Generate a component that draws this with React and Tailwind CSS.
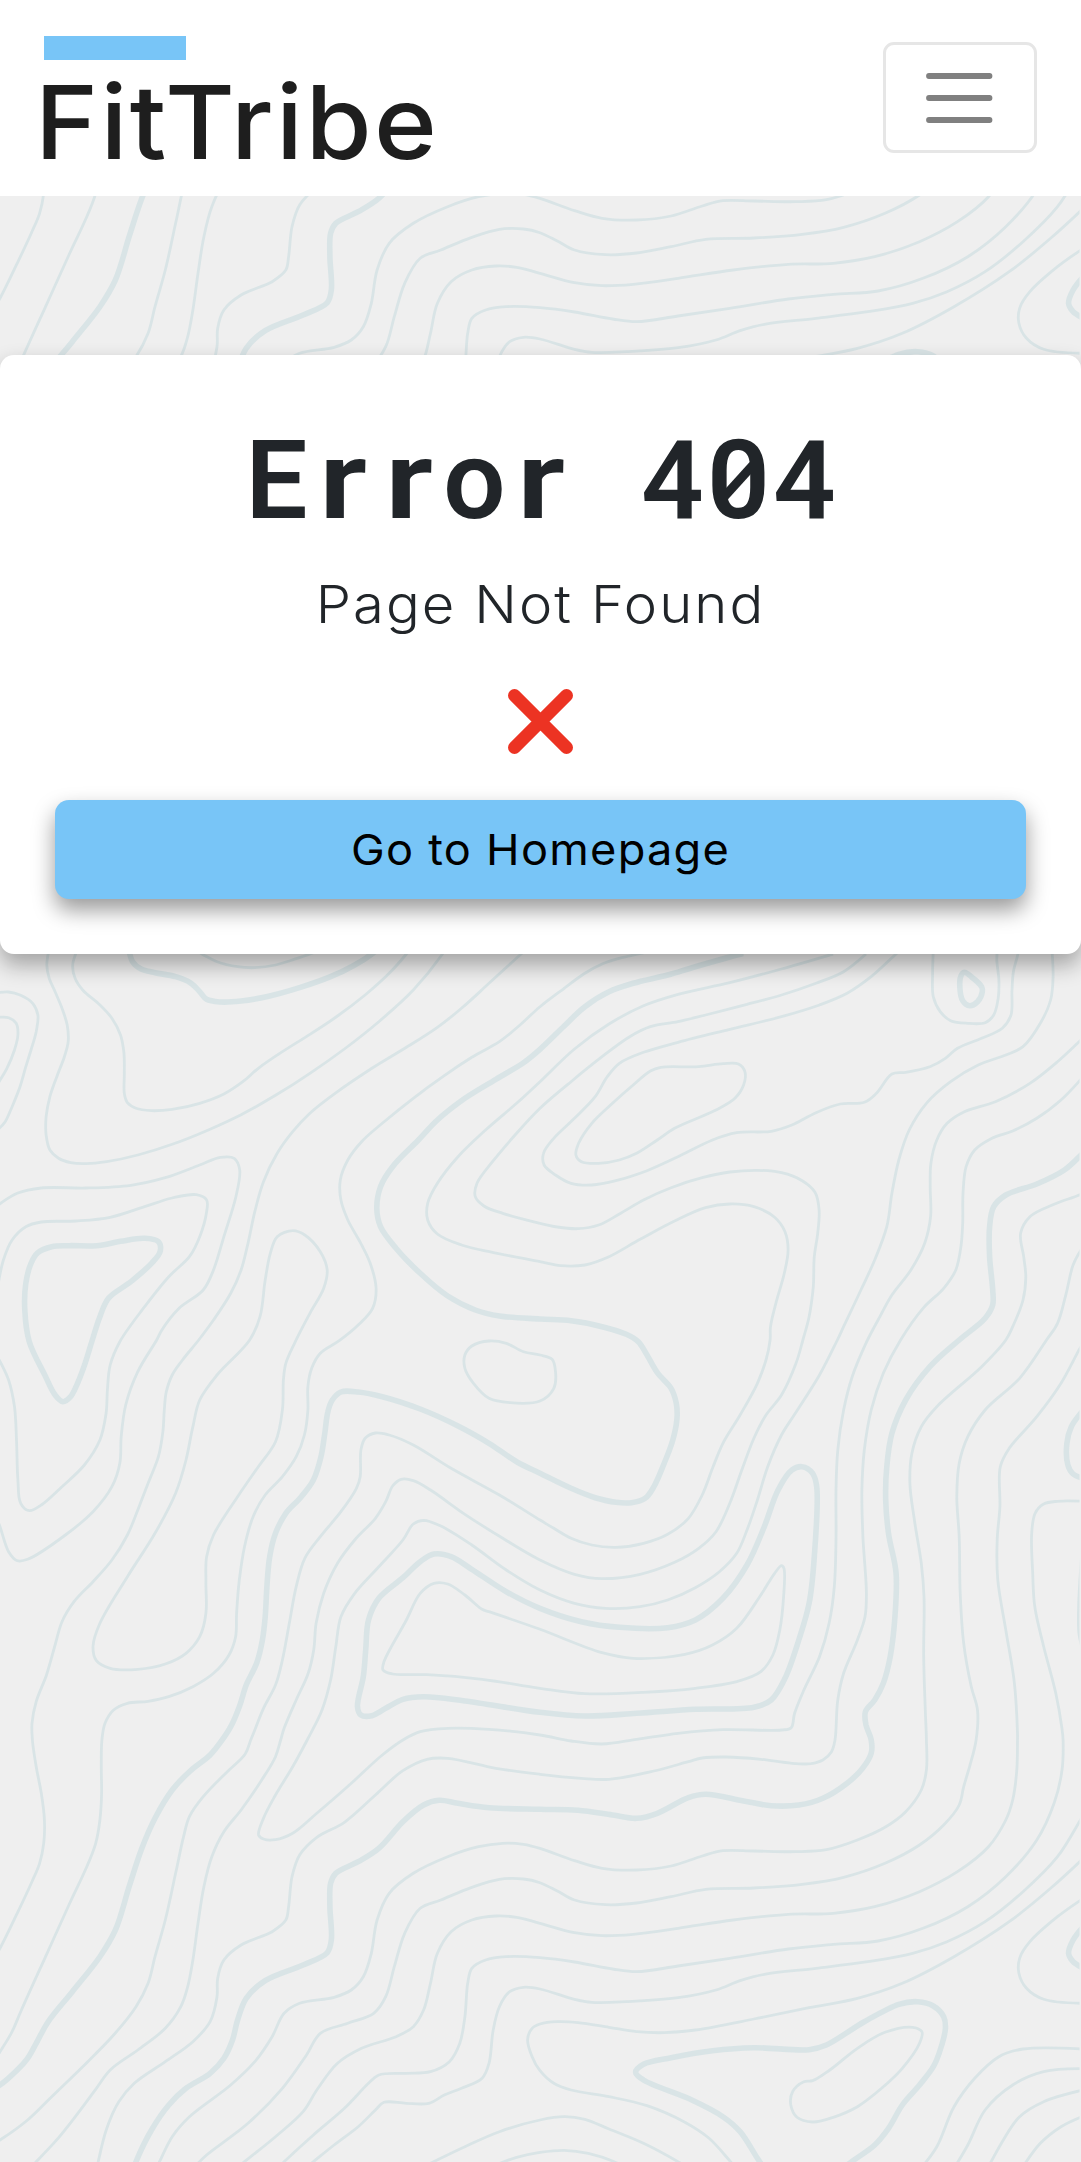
import React from "react";

// The contour map is digitised in six sheets; each sheet has its own origin and unit size.
const SHEETS = {
  A: [0, 940, 540 / 1568],
  B: [540, 940, 541 / 1568],
  C: [0, 1340, 540 / 1568],
  D: [540, 1340, 541 / 1568],
  E: [0, 1740, 540 / 1568],
  F: [540, 1740, 541 / 1568],
};
const TILE_HEIGHT = 1650;

const THIN = [
  "A -5,158 25,156 60,166 95,190 110,225 105,275 90,330 75,380 58,440 35,500 15,545 -5,568",
  "A -5,232 25,233 47,250 52,285 42,330 20,385 -5,428",
  "A 141,35 136,75 143,115 160,155 180,205 195,255 198,305 187,350 165,410 145,470 134,530 134,585 145,630 170,655 205,668 250,671 310,665 400,645 500,613 600,572 700,524 800,466 900,400 1000,327 1100,245 1200,150 1285,42 1310,0",
  "A 222,35 211,75 218,115 240,150 290,195 325,235 350,285 360,340 361,400 361,460 370,488 395,505 440,512 500,508 580,490 650,462 705,425 750,385 820,335 900,283 980,228 1060,165 1130,100 1180,42 1210,0",
  "A 560,25 590,44 630,65 690,80 740,83 800,75 860,56 910,38",
  "A 1560,0 1510,45 1420,130 1340,205 1270,262 1180,322 1080,385 980,455 900,520 850,575 805,640 765,725 740,815 720,910 700,990 670,1060 620,1140 C 577,0 530,60 500,105 483,155 477,210 473,275 460,350 430,430 400,510 370,585 325,660 270,725 215,785 180,845 160,915 135,1005 105,1085 93,1150 E 94,0 105,80 120,160 129,240 127,310 115,370 95,420 50,520 0,625 -20,660",
  "B 310,36 285,42 230,55 180,72 130,100 70,145 0,200 A 1510,255 1450,305 1370,352 1290,407 1200,475 1110,550 1050,605 1010,660 988,720 990,780 1010,840 1045,905 1075,970 1092,1045 1082,1105 1040,1155 C 985,2 930,40 905,85 894,140 894,210 884,285 860,350 820,410 770,465 735,530 710,620 695,720 687,820 684,890 665,945 620,1000 560,1040 490,1070 430,1084 370,1090 330,1110 305,1150 E 296,0 294,80 295,160 290,240 278,310 250,385 200,495 130,655 60,815 35,875 0,935 -20,965",
  "B 850,42 700,87 550,128 400,163 300,197 200,252 100,327 0,425 A 1500,490 1410,570 1330,650 1270,730 1242,790 1242,840 1270,882 1340,915 1430,937 B 0,965 60,977 130,975 200,950 290,898 390,843 480,803 550,792 620,800 680,832 710,875 719,930 708,1000 685,1085 668,1160 D 667,0 655,60 630,130 580,225 530,310 500,385 470,465 430,535 370,583 300,610 220,622 150,615 90,595 40,565 0,540 C 1450,465 1310,385 1200,315 1130,285 1090,279 1060,295 1048,330 1046,410 1035,445 990,515 930,590 885,655 860,740 840,850 820,960 800,1035 765,1105 740,1170 E 728,0 712,42 660,95 590,170 550,230 533,290 510,400 480,540 450,650 430,730 395,800 330,885 240,980 150,1070 80,1140 0,1200 -20,1212",
  "B 945,42 880,95 800,130 700,165 600,193 480,225 400,245 320,260 260,290 180,350 90,425 0,505 A 1500,580 1430,665 1385,730 1380,770 1405,798 1460,820 B 0,850 50,861 110,866 170,855 230,822 300,780 380,743 470,713 550,696 630,691 700,698 760,722 797,757 809,810 805,880 795,950 792,1040 780,1130 D 762,0 742,70 700,165 655,225 620,295 585,390 550,490 510,575 460,625 390,667 290,703 180,716 100,703 0,660 C 1460,595 1350,523 1250,450 1200,422 1165,418 1140,438 1120,485 1090,535 1030,600 980,670 940,760 918,850 911,930 895,1000 860,1080 825,1165 E 815,0 800,50 760,120 700,210 650,275 615,350 592,440 575,550 560,660 545,740 525,800 480,865 400,930 320,990 280,1045 215,1135 160,1205 105,1265 60,1310",
  "B 1050,25 1032,42 960,110 890,160 810,195 700,230 550,268 400,307 300,337 230,370 195,410 160,470 100,535 40,595 10,640 12,675 45,705 90,730 150,735 220,722 310,692 400,650 500,600 570,578 670,574 730,555 800,518 870,492 940,487 975,460 1020,402 1060,397 1130,380 1175,355 1210,325 1280,295 1340,265 1365,225 1368,150 1372,95 1385,42 1390,0",
  "B 320,393 350,382 460,380 530,371 575,372 594,395 590,435 565,475 510,510 390,565 340,600 280,640 230,660 170,670 120,665 104,645 112,610 150,550 210,490 270,435 Z",
  "B 1140,30 1138,100 1140,170 1160,215 1190,242 1240,250 1290,248 1315,225 1328,175 1330,120 1324,60 1326,30",
  "B 1484,30 1487,110 1480,180 1450,250 1400,320 1350,345 1270,375 1190,425 1120,490 1070,570 1040,660 1020,760 1005,860 970,960 930,1050 880,1160 D 862,0 810,105 740,220 700,285 660,380 630,480 600,570 570,640 520,695 450,743 370,780 290,800 190,805 100,790 0,750 C 1470,690 1370,615 1280,558 1230,541 1200,552 1170,600 1100,680 1030,760 990,830 975,920 960,1020 935,1110 E 892,0 850,80 800,165 765,235 751,285 765,297 800,299 850,280 920,220 1020,130 1110,45 C 1170,1200 1220,1175 1300,1165 1420,1168 1568,1185 D 90,1203 180,1212 280,1198 400,1180 530,1169 700,1170 728,1163 738,1120 765,1050 810,950 838,850 853,740 858,600 858,450 863,330 880,210 905,110 B 947,1205 985,1130 1020,1065 1075,990 1115,910 1132,830 1131,740 1133,670 1150,600 1180,550 1230,515 1320,485 1420,430 1500,365 1568,300 1600,270",
  "B 1600,380 1568,418 1510,480 1440,535 1370,573 1310,595 1260,630 1235,680 1226,760 1225,850 1220,920 1205,990 1170,1045 1110,1105 D 1045,0 995,100 960,210 940,330 933,450 936,590 946,760 942,830 920,900 880,1000 863,1080 F 855,0 845,35 820,60 785,71 730,70 640,58 540,51 470,54 430,65 330,93 200,118 120,115 0,103 E 1440,85 1300,55 1240,58 1170,92 1090,165 1000,247 920,292 870,345 848,410 838,500 830,540 790,575 700,615 650,660 632,715 630,770 610,845 560,905 480,965 390,1030 345,1085 310,1165 285,1265 275,1310",
  "B 1600,745 1568,763 1490,793 1420,830 1393,880 1402,950 1408,1010 1400,1080 1370,1160 D 1350,0 1280,80 1150,200 1105,260 1078,340 1072,430 1085,540 1105,670 1113,770 1112,950 1117,1120 F 1120,0 1120,90 1105,150 1060,215 1000,262 920,300 830,329 740,335 620,333 530,332 470,348 380,378 280,390 180,385 100,362 0,325 E 1520,313 1460,310 1390,320 1300,350 1200,400 1130,460 1095,540 1078,640 1055,710 1020,750 970,772 870,790 825,820 790,890 740,965 670,1035 550,1130 500,1190 463,1265 440,1310",
  "B 1568,930 1545,975 1525,1060 1500,1150 D 1468,0 1390,115 1290,210 1240,290 1215,370 1208,470 1215,590 1218,760 1228,910 1250,1040 1268,1110 F 1264,0 1245,80 1228,140 1215,195 1170,255 1100,315 1000,370 880,412 760,433 620,444 480,448 380,470 280,489 190,494 100,480 50,453 0,428 E 1520,417 1450,418 1370,442 1280,480 1220,505 1175,580 1145,680 1120,770 1085,820 1010,850 930,880 890,945 820,1045 720,1150 600,1245 570,1275",
  "D 1575,10 1565,25 1510,130 1440,230 1360,325 1334,380 1333,500 1325,600 1327,720 1350,870 1375,1030 1384,1180 F 1384,0 1382,90 1370,180 1350,240 1300,320 1210,395 1100,455 970,500 850,520 720,523 560,540 400,565 270,583 180,587 100,578 0,550 E 1500,532 1440,528 1370,540 1310,575 1270,640 1250,730 1230,810 1200,860 1150,890 1050,925 980,970 920,1050 880,1115 800,1190 710,1265 680,1290",
  "D 1575,484 1500,484 1460,492 1435,520 1425,580 1428,700 1434,800 1460,920 1495,1060 1512,1160 F 1516,0 1513,90 1490,190 1440,300 1350,410 1240,500 1110,565 980,603 850,613 720,627 550,655 400,678 280,695 210,687 100,666 0,653 E 1470,650 1410,660 1370,685 1358,730 1350,830 1335,910 1305,965 1250,995 1180,1000 1100,1005 1070,1030 1000,1105 910,1185 825,1265 800,1290",
  "F 1575,225 1565,242 1500,350 1400,455 1290,545 1180,605 1080,640 950,665 800,685 650,703 580,722 510,750 400,773 250,785 150,787 100,778 0,747 E 1520,742 1480,755 1450,800 1432,870 1420,970 1400,1015 1340,1045 1290,1065 1245,1090 1180,1090 1115,1087 1090,1110 1040,1160 970,1215 910,1265 880,1290",
  "F 1575,355 1480,445 1360,545 1200,650 1050,730 920,775 780,803 620,837 450,870 360,878 280,875 200,862 110,848 50,845 0,852 E 1545,865 1532,900 1545,950 F 0,992 40,1030 90,1050 200,1070 310,1097 420,1147 490,1195 552,1265 580,1300",
  "E 1230,1280 1350,1220 1450,1175 F 0,1140 70,1130 130,1138 200,1167 300,1210 400,1265 440,1290",
  "E 1440,1275 1500,1252 F 0,1237 70,1231 140,1240 215,1265 250,1285",
  "F 765,1025 790,1022 840,990 920,925 1000,877 1080,862 1107,875 1100,910 1050,985 990,1045 920,1100 850,1132 790,1146 745,1132 727,1095 732,1055 Z",
  "F 1575,475 1500,530 1420,605 1390,655 1388,700 1410,745 1460,778 1575,790",
  "F 1100,1290 1150,1220 1200,1100 1260,1015 1330,950 1400,927 1575,927",
  "F 1200,1285 1240,1215 1290,1110 1370,1035 1460,995 1575,986",
  "F 1300,1280 1340,1205 1390,1130 1460,1085 1575,1050",
  "F 1400,1280 1450,1210 1510,1160 1575,1128",
  "D 1570,640 1561,800 1562,880 1570,920",
  "A -5,795 50,760 120,744 250,744 380,736 480,713 580,675 640,652 680,655 696,690 685,770 650,890 620,990 590,1050 520,1105 470,1170 C 455,0 400,95 365,195 352,290 348,370 325,440 270,515 190,585 80,658 50,662 25,635 0,560 -15,520",
  "A -5,1030 10,960 35,900 75,860 120,846 220,843 320,832 420,800 500,774 570,764 600,780 600,815 580,890 550,950 490,1010 420,1100 C 348,5 320,75 312,150 308,220 290,300 245,375 180,440 120,495 85,512 60,490 52,420 48,300 42,200 25,120 -5,55",
  "A 850,872 885,885 930,935 950,990 940,1045 900,1120 C 855,10 830,70 823,120 820,210 800,305 750,380 690,470 620,585 600,650 598,730 598,820 580,890 540,940 480,972 400,988 320,985 280,962 270,920 290,850 370,710 450,580 510,460 540,360 560,260 580,180 630,105 725,0 A 755,1130 770,1020 785,940 805,890 Z",
  "C 1350,45 1370,18 1420,3 1470,10 1520,35 1568,45 D 35,58 45,95 40,145 0,183 C 1480,188 1420,175 1375,130 1350,85 Z",
  "C 1568,868 1420,815 1400,808 1350,765 1300,732 1260,730 1220,760 1180,840 1115,965 1112,990 1140,1002 1240,1004 1400,1018 1568,1045 D 130,1061 300,1057 450,1045 570,1025 640,995 675,945 695,870 706,770 707,685 700,677 680,700 640,765 570,865 500,915 420,943 270,955 180,938 Z",
];

const THICK = [
  "A 374,25 385,65 410,87 450,98 510,110 555,130 580,155 600,178 640,186 700,183 780,169 870,143 960,110 1030,75 1080,42 1120,5",
  "B 590,40 450,80 370,105 270,130 200,155 130,200 70,258 0,328 A 1520,368 1440,418 1350,475 1270,540 1215,600 1140,680 1105,740 1094,805 1105,860 1150,925 1220,1000 1300,1068 1380,1110 1450,1128 1568,1137 B 90,1142 180,1160 250,1183 D 285,5 310,45 340,98 380,145 395,190 397,235 385,300 360,370 330,440 305,475 265,488 220,487 160,473 90,445 0,400 C 1500,365 1420,310 1330,258 1220,207 1110,170 1040,156 990,156 965,180 952,215 943,280 932,350 910,420 875,470 830,520 800,580 783,650 775,740 770,830 762,900 745,970 715,1035 695,1100 670,1160 E 645,0 610,45 550,95 500,150 450,235 410,330 375,440 335,570 290,650 210,755 140,845 105,910 80,955 50,990 0,1035 -20,1045",
  "B 1230,97 1250,110 1280,140 1282,155 1268,185 1245,197 1225,182 1217,145 1220,108 Z",
  "B 1600,610 1568,645 1520,690 1440,732 1350,765 1315,800 1303,860 1303,950 1312,1050 1312,1095 1290,1135 D 1215,0 1130,80 1060,180 1020,280 1005,380 1002,480 1010,580 1032,700 1028,840 1015,950 995,1030 970,1080 943,1115 945,1155 F 960,0 960,40 935,85 890,130 820,175 750,195 670,197 590,183 480,163 430,173 340,220 280,235 210,225 110,211 0,208 E 1420,203 1330,190 1275,181 1230,195 1170,245 1100,325 1040,365 975,400 960,430 958,500 962,600 950,638 880,675 770,722 715,775 690,840 675,900 650,955 610,1000 540,1045 490,1095 440,1170 395,1265 380,1310",
  "F 650,1285 630,1255 580,1175 530,1130 440,1080 300,1020 277,997 300,973 380,953 500,932 620,923 780,929 830,915 940,845 1040,793 1095,785 1140,798 1170,830 1175,865 1160,930 1140,980 1100,1035 1050,1095 1010,1165 970,1215 910,1260 870,1290",
  "F 1575,560 1545,600 1532,640 1545,665 1575,685",
  "D 1575,210 1540,260 1527,310 1530,375 1545,402 1575,415",
  "A 150,920 200,917 280,917 350,904 420,895 460,905 465,935 440,970 380,1025 315,1075 290,1130 C 268,0 247,70 225,130 205,170 183,185 160,165 130,105 85,5 A 72,1110 75,1030 90,970 110,938 Z",
  "C 1568,805 1470,755 1370,688 1310,650 1260,642 1220,665 1170,713 1100,775 1070,840 1062,930 1055,1010 1038,1100 1048,1125 1080,1127 1120,1105 1170,1078 1230,1070 1350,1083 1568,1117 D 130,1128 280,1120 450,1108 620,1102 670,1080 710,1015 750,900 780,790 795,650 802,440 790,400 760,380 730,390 690,450 650,560 600,675 530,775 450,840 370,863 230,862 120,845 Z",
];

// Joins the listed survey points with a Catmull-Rom spline.
function contour(source) {
  let sheet = SHEETS.A;
  let closed = false;
  const pts = [];
  for (const token of source.split(" ")) {
    if (token === "Z") closed = true;
    else if (SHEETS[token]) sheet = SHEETS[token];
    else {
      const [x, y] = token.split(",").map(Number);
      pts.push([sheet[0] + x * sheet[2], sheet[1] + y / 3]);
    }
  }
  const n = pts.length;
  const at = (i) => (closed ? pts[(i + n) % n] : pts[Math.max(0, Math.min(n - 1, i))]);
  const dist = (a, b) => Math.max(0.01, Math.sqrt(Math.hypot(a[0] - b[0], a[1] - b[1])));
  let d = `M${pts[0][0].toFixed(1)} ${pts[0][1].toFixed(1)}`;
  for (let i = 0; i < (closed ? n : n - 1); i++) {
    const [p0, p1, p2, p3] = [at(i - 1), at(i), at(i + 1), at(i + 2)];
    const a = dist(p0, p1);
    const b = dist(p1, p2);
    const c = dist(p2, p3);
    const c1 = [0, 1].map(
      (k) => (a * a * p2[k] - b * b * p0[k] + (2 * a * a + 3 * a * b + b * b) * p1[k]) / (3 * a * (a + b))
    );
    const c2 = [0, 1].map(
      (k) => (c * c * p1[k] - b * b * p3[k] + (2 * c * c + 3 * c * b + b * b) * p2[k]) / (3 * c * (c + b))
    );
    d += `C${[...c1, ...c2, ...p2].map((v) => v.toFixed(1)).join(" ")}`;
  }
  return closed ? d + "Z" : d;
}

function ContourMap() {
  return (
    <svg className="absolute inset-0 h-full w-full" viewBox="0 0 1081 2162" fill="none" stroke="#d9e4e6" aria-hidden="true">
      <defs>
        <clipPath id="sheet-edge">
          <rect x="0" y="940" width="1079.5" height="1222" />
        </clipPath>
        <g id="contours" clipPath="url(#sheet-edge)">
          <g strokeWidth="2.8">
            {THIN.map((line) => (
              <path key={line} d={contour(line)} />
            ))}
          </g>
          <g strokeWidth="5.6">
            {THICK.map((line) => (
              <path key={line} d={contour(line)} />
            ))}
          </g>
        </g>
      </defs>
      <use href="#contours" />
      <use href="#contours" y={-TILE_HEIGHT} />
    </svg>
  );
}

function Header() {
  return (
    <header className="relative flex h-[196px] items-start justify-between bg-white pl-[44px] pr-[44px]">
      <div className="pt-[36px]">
        <div className="h-[24px] w-[142px] bg-[#78c5f7]" />
        <div className="mt-[10px] -ml-[9px] origin-left scale-x-[1.05] whitespace-nowrap font-['Inter',sans-serif] text-[102px] font-medium leading-[104px] tracking-[2.2px] text-[#1e1e1e]">
          FitTribe
        </div>
      </div>
      <button
        type="button"
        aria-label="Toggle navigation"
        className="mt-[42px] flex h-[111px] w-[154px] items-center justify-center rounded-[11px] border-[3px] border-[#e6e6e6]"
      >
        <svg className="h-[66px] w-[82px]" viewBox="0 0 82 66" stroke="#808080" strokeWidth="5.8" strokeLinecap="round" fill="none">
          <path d="M10 11H70.5M10 33H70.5M10 55H70.5" />
        </svg>
      </button>
    </header>
  );
}

function ErrorCode() {
  return (
    <h1 className="flex h-[132px] justify-center font-['Roboto',sans-serif] text-[110px] font-[560] leading-[132px] text-[#212529]">
      {[..."Error 404"].map((char, i) => (
        <span key={i} className={`relative w-[66px] whitespace-pre text-center ${char === "r" ? "scale-x-[1.22]" : ""}`}>
          {char}
          {char === "0" && (
            <svg className="absolute left-0 top-0 h-[132px] w-[66px]" viewBox="0 0 66 132" stroke="#212529" strokeWidth="9" aria-hidden="true">
              <path d="M18 82L47 50" />
            </svg>
          )}
        </span>
      ))}
    </h1>
  );
}

export default function App() {
  return (
    <div className="relative h-[2162px] w-[1081px] overflow-hidden bg-[#efefef]">
      <ContourMap />
      <Header />
      <main className="relative mt-[159px] flex h-[599px] flex-col rounded-[14px] bg-white px-[55px] pt-[60px] text-center shadow-[0_11px_22px_rgba(0,0,0,0.32)]">
        <ErrorCode />
        <p className="mt-[25px] h-[66px] scale-x-[1.08] whitespace-nowrap font-['Inter',sans-serif] text-[52px] font-light leading-[66px] tracking-[1.9px] text-[#212529]">
          Page Not Found
        </p>
        <svg className="mx-auto mt-[51px] h-[65px] w-[65px]" viewBox="0 0 65 65" stroke="#ec3323" strokeWidth="13" strokeLinecap="round" aria-hidden="true">
          <path d="M6.5 6.5L58.5 58.5M58.5 6.5L6.5 58.5" />
        </svg>
        <a
          href="#"
          className="mt-[46px] flex h-[99px] items-center justify-center rounded-[14px] bg-[#78c5f7] font-['Inter',sans-serif] text-[43px] text-black shadow-[0_11px_22px_rgba(0,0,0,0.4)]"
        >
          <span className="scale-x-[1.05] tracking-[1.2px]">Go to Homepage</span>
        </a>
      </main>
    </div>
  );
}
